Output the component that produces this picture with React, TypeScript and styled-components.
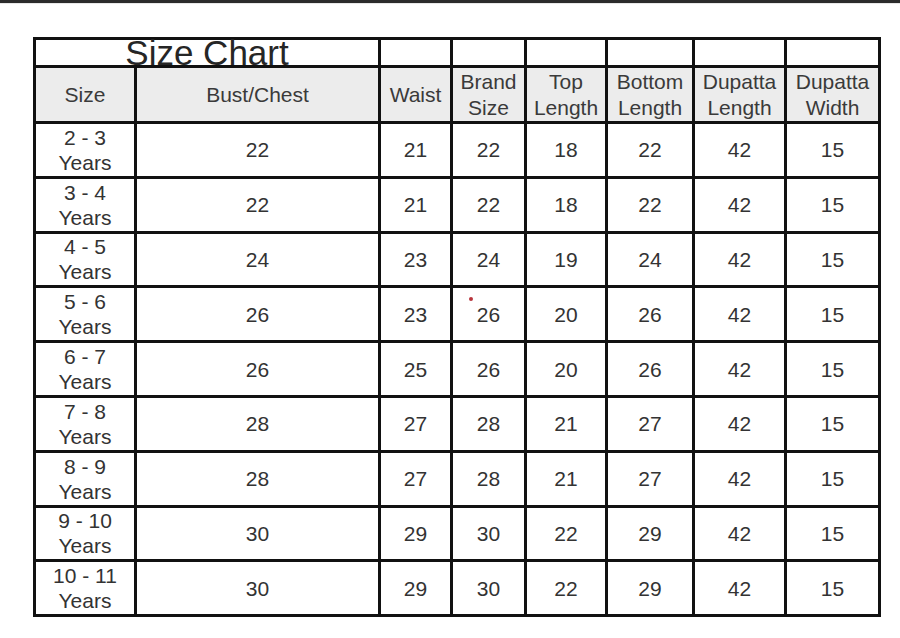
import styled, { createGlobalStyle } from "styled-components";

const GlobalStyle = createGlobalStyle`
  html, body {
    margin: 0;
    padding: 0;
    background: #ffffff;
  }
  body {
    font-family: "Liberation Sans", Arial, sans-serif;
  }
`;

const widths = [101, 244, 72, 74, 81, 87, 92, 94];

const headers = [
  ["Size"],
  ["Bust/Chest"],
  ["Waist"],
  ["Brand", "Size"],
  ["Top", "Length"],
  ["Bottom", "Length"],
  ["Dupatta", "Length"],
  ["Dupatta", "Width"],
];

const rows: [string, number[]][] = [
  ["2 - 3", [22, 21, 22, 18, 22, 42, 15]],
  ["3 - 4", [22, 21, 22, 18, 22, 42, 15]],
  ["4 - 5", [24, 23, 24, 19, 24, 42, 15]],
  ["5 - 6", [26, 23, 26, 20, 26, 42, 15]],
  ["6 - 7", [26, 25, 26, 20, 26, 42, 15]],
  ["7 - 8", [28, 27, 28, 21, 27, 42, 15]],
  ["8 - 9", [28, 27, 28, 21, 27, 42, 15]],
  ["9 - 10", [30, 29, 30, 22, 29, 42, 15]],
  ["10 - 11", [30, 29, 30, 22, 29, 42, 15]],
];

export default function App() {
  return (
    <Page>
      <GlobalStyle />
      <TopBar />
      <Chart>
        <colgroup>
          {widths.map((w, i) => (
            <col key={i} style={{ width: w }} />
          ))}
        </colgroup>
        <tbody>
          <TitleRow>
            <TitleCell colSpan={2}>Size Chart</TitleCell>
            {widths.slice(2).map((_, i) => (
              <td key={i} />
            ))}
          </TitleRow>
          <HeadRow>
            {headers.map((lines, i) => (
              <HeadCell key={i}>
                {lines.map((l, j) => (
                  <Line key={j}>{l}</Line>
                ))}
              </HeadCell>
            ))}
          </HeadRow>
          {rows.map(([size, values], r) => (
            <DataRow key={size}>
              <Cell>
                <Line>{size}</Line>
                <Line>Years</Line>
              </Cell>
              {values.map((v, i) => (
                <Cell key={i}>
                  {r === 3 && i === 2 && <Dot />}
                  {v}
                </Cell>
              ))}
            </DataRow>
          ))}
        </tbody>
      </Chart>
    </Page>
  );
}

const Page = styled.div`
  width: 900px;
  height: 638px;
  overflow: hidden;
  background: #ffffff;
`;

const TopBar = styled.div`
  height: 3px;
  background: #2c2c2c;
  border-bottom: 1px solid #e8e8e8;
`;

const Chart = styled.table`
  border-collapse: collapse;
  table-layout: fixed;
  width: 848px;
  margin: 33px 0 0 33px;
  color: #333333;
  font-family: "Liberation Sans", Arial, sans-serif;
  font-size: 21px;

  td {
    border: 3px solid #111111;
    padding: 0;
    text-align: center;
    vertical-align: middle;
  }
`;

const TitleRow = styled.tr`
  height: 25px;
  background: #ffffff;
`;

const TitleCell = styled.td`
  font-size: 35px;
  line-height: 25px;
  color: #262626;
  overflow: visible;
  white-space: nowrap;
`;

const HeadRow = styled.tr`
  height: 56px;
  background: #ececec;
  line-height: 26px;
`;

const HeadCell = styled.td`
  color: #3a3a3a;
`;

const DataRow = styled.tr`
  height: 54.8px;
  background: #ffffff;
  line-height: 25px;
`;

const Cell = styled.td`
  position: relative;
`;

const Line = styled.div`
  white-space: nowrap;
`;

const Dot = styled.span`
  position: absolute;
  left: 16px;
  top: 9px;
  width: 4px;
  height: 4px;
  border-radius: 50%;
  background: #b8343c;
`;
